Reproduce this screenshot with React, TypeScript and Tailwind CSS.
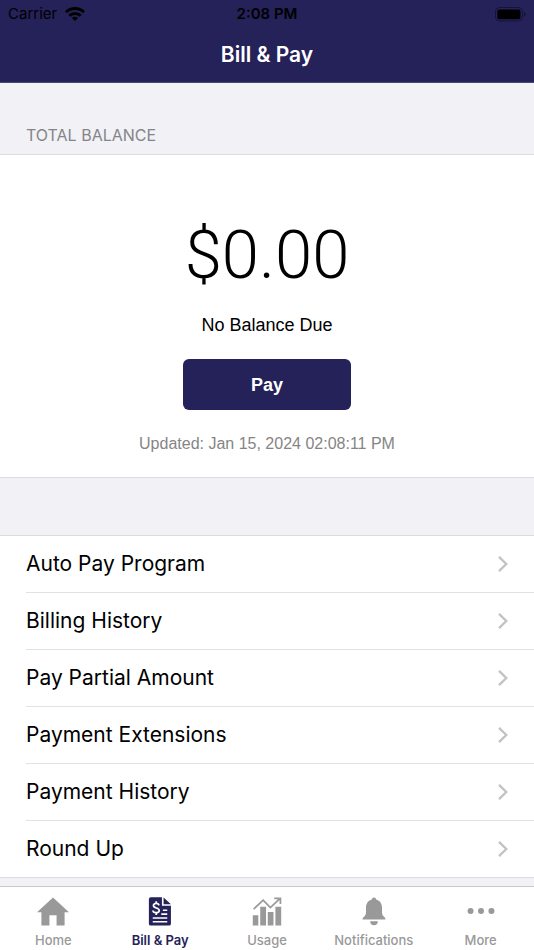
import type { ReactNode } from "react";

const menuItems = [
  "Auto Pay Program",
  "Billing History",
  "Pay Partial Amount",
  "Payment Extensions",
  "Payment History",
  "Round Up",
];

function WifiIcon() {
  return (
    <svg width="20" height="15" viewBox="0 0 20 15" fill="none" stroke="#000" strokeWidth="2.9" aria-hidden="true">
      <path d="M1 5.2C6 0.300 14 0.300 19 5.2" />
      <path d="M4.300 8.800C7.500 5.800 12.500 5.800 15.700 8.800" />
      <path d="M10 14L6.900 11C8.600 9.400 11.400 9.400 13.100 11Z" fill="#000" stroke="none" />
    </svg>
  );
}

function BatteryIcon() {
  return (
    <svg width="31" height="15" viewBox="0 0 31 15" aria-hidden="true">
      <rect x="0.5" y="0.5" width="27" height="13.5" rx="4" fill="none" stroke="#000" strokeOpacity="0.4" />
      <rect x="2.3" y="2.4" width="23.2" height="9.8" rx="2" fill="#000" />
      <path d="M29 5v4.600c1-.4 1.600-1.300 1.600-2.300S30 5.400 29 5Z" fill="#000" fillOpacity="0.5" />
    </svg>
  );
}

function HomeIcon() {
  return (
    <svg width="34" height="30" viewBox="0 0 34 30" fill="currentColor" aria-hidden="true">
      <path d="M17 0.500L33.500 15.800H29V29.500H20.700V19H13.300V29.500H5V15.800H0.500Z" />
    </svg>
  );
}

function BillIcon() {
  return (
    <svg width="24" height="30" viewBox="0 0 24 30" aria-hidden="true">
      <path d="M2.500 0.300H14V9H23.300V27.600a2 2 0 0 1-2 2H2.500a2 2 0 0 1-2-2V2.300a2 2 0 0 1 2-2Z" fill="currentColor" />
      <path d="M15.700 0.500L23.300 7.600H15.700Z" fill="currentColor" />
      <g fill="none" stroke="#fff" strokeWidth="1.600">
        <path d="M10.900 8.700C10.600 6.200 5.200 5.800 5.200 8.800C5.200 12 11.200 10.700 11.200 13.900C11.200 17.200 4.800 16.800 4.700 13.900M8.100 4.300V7M8.100 16V18.600" strokeWidth="1.800" />
        <path d="M15 13.700H19.500M13.300 17.700H19.500M4.500 21.700H19.500M4.500 25.500H19.500" />
      </g>
    </svg>
  );
}

function UsageIcon() {
  return (
    <svg width="30" height="30" viewBox="0 0 30 30" fill="currentColor" aria-hidden="true">
      <path d="M0.300 18.800H6V29.500H0.300ZM8 10H14V29.500H8ZM15.800 15.500H21.700V29.500H15.800ZM23.700 10H29.700V29.500H23.700Z" />
      <path d="M1.200 12.500L11 3.300L18.500 11L28.300 1.700M22.500 1.300H28.900V7.300" fill="none" stroke="currentColor" strokeWidth="1.800" />
    </svg>
  );
}

function BellIcon() {
  return (
    <svg width="24" height="30" viewBox="0 0 24 30" fill="currentColor" aria-hidden="true">
      <path d="M12 0.500c1.300 0 2 .8 2.200 2C18.300 3.600 20.300 7 20.300 11v5c0 2.400 1 3.600 2.600 5 1 .9.900 2 .9 2.300H.200c0-.3-.1-1.400.9-2.300C2.700 19.600 3.700 18.400 3.700 16v-5c0-4 2-7.400 6.100-8.500C10 1.300 10.700.500 12 .500Z" />
      <path d="M8 25H16C16 27.700 14.300 29.300 12 29.300S8 27.700 8 25Z" />
    </svg>
  );
}

function MoreIcon() {
  return (
    <svg width="28" height="30" viewBox="0 0 28 30" fill="currentColor" aria-hidden="true">
      <circle cx="3.200" cy="14.500" r="3.100" />
      <circle cx="14" cy="14.500" r="3.100" />
      <circle cx="24.800" cy="14.500" r="3.100" />
    </svg>
  );
}

function Tab({ label, icon, active = false }: { label: string; icon: ReactNode; active?: boolean }) {
  return (
    <a
      href="#"
      aria-current={active ? "page" : undefined}
      className={
        active
          ? "flex flex-1 flex-col items-center gap-1 pt-2.5 font-semibold text-[#252159]"
          : "flex flex-1 flex-col items-center gap-1 pt-2.5 font-medium text-[#999999]"
      }
    >
      {icon}
      <span className="text-[13px] leading-5 whitespace-nowrap">{label}</span>
    </a>
  );
}

export default function App() {
  return (
    <div className="flex h-screen flex-col overflow-hidden bg-[#f2f1f6] font-['Inter',sans-serif] text-black">
      <header className="shrink-0 border-b border-[#4b4778] bg-[#252159]">
        <div className="grid h-7 grid-cols-3 items-center px-2 text-[15px] leading-5">
          <div className="flex items-center gap-2">
            <span>Carrier</span>
            <WifiIcon />
          </div>
          <span className="text-center font-semibold">2:08 PM</span>
          <div className="flex justify-end">
            <BatteryIcon />
          </div>
        </div>
        <h1 className="flex h-[54px] items-center justify-center text-[21px] font-semibold text-white">Bill &amp; Pay</h1>
      </header>

      <main className="min-h-0 flex-1 overflow-hidden">
        <h2 className="px-[26px] pt-[41px] pb-[7px] text-base leading-[23px] text-[#85848a]">TOTAL BALANCE</h2>

        <section className="flex flex-col items-center border-y border-[#dcdbdf] bg-white pt-16 pb-[21px] font-['Liberation_Sans',Arial,sans-serif]">
          <p className="font-['Roboto',sans-serif] text-[67px] leading-[72px] font-light">$0.00</p>
          <p className="mt-[22px] text-lg leading-6">No Balance Due</p>
          <button
            type="button"
            className="mt-[22px] h-[51px] w-[168px] rounded-md bg-[#252159] text-lg font-bold text-white"
          >
            Pay
          </button>
          <p className="mt-[22px] text-base leading-6 text-[#858585]">Updated: Jan 15, 2024 02:08:11 PM</p>
        </section>

        <nav aria-label="Billing options" className="mt-[57px] border-y border-[#dcdbdf] bg-white pl-[26px]">
          <ul>
            {menuItems.map((item) => (
              <li key={item} className="border-b border-[#e2e2e4] last:border-b-0">
                <a href="#" className="flex h-14 items-center justify-between pr-[26px] text-[21px] leading-7">
                  {item}
                  <svg width="10" height="16" viewBox="0 0 10 16" fill="none" stroke="#c2c2c5" strokeWidth="2.300" aria-hidden="true">
                    <path d="M1 0.900L8.300 8L1 15.100" />
                  </svg>
                </a>
              </li>
            ))}
          </ul>
        </nav>
      </main>

      <nav aria-label="Main" className="flex h-16 shrink-0 border-t border-[#c9c9cc] bg-white">
        <Tab label="Home" icon={<HomeIcon />} />
        <Tab label="Bill &amp; Pay" icon={<BillIcon />} active />
        <Tab label="Usage" icon={<UsageIcon />} />
        <Tab label="Notifications" icon={<BellIcon />} />
        <Tab label="More" icon={<MoreIcon />} />
      </nav>
    </div>
  );
}
